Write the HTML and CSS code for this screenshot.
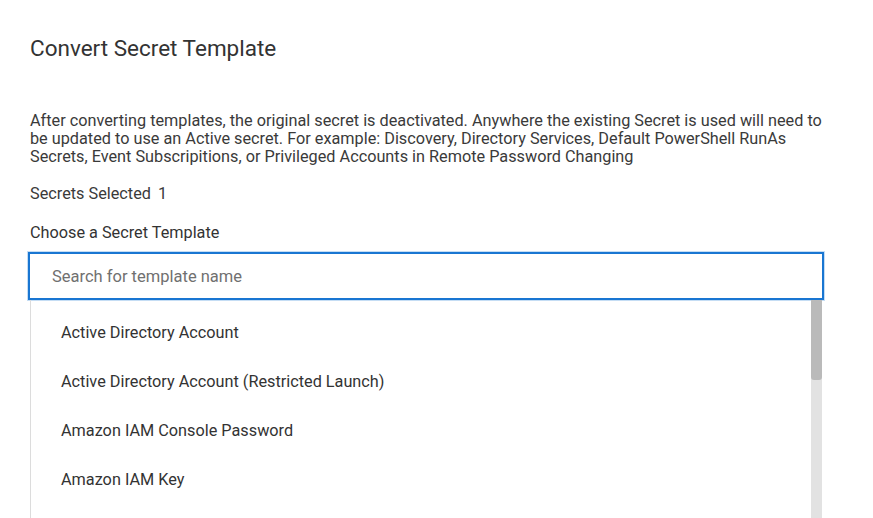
FILE: index.html
```html
<!DOCTYPE html>
<html lang="en">
<head>
<meta charset="utf-8">
<title>Convert Secret Template</title>
<link rel="stylesheet" href="styles.css">
</head>
<body>
<div class="page">
  <h1 class="title">Convert Secret Template</h1>
  <p class="desc">After converting templates, the original secret is deactivated. Anywhere the existing Secret is used will need to be updated to use an Active secret. For example: Discovery, Directory Services, Default PowerShell RunAs Secrets, Event Subscripitions, or Privileged Accounts in Remote Password Changing</p>
  <div class="selected">Secrets Selected <span class="count">1</span></div>
  <div class="label">Choose a Secret Template</div>
  <div class="search"><input class="search-input" type="text" placeholder="Search for template name"></div>
  <div class="dropdown">
    <ul class="list">
      <li class="item">Active Directory Account</li>
      <li class="item">Active Directory Account (Restricted Launch)</li>
      <li class="item">Amazon IAM Console Password</li>
      <li class="item">Amazon IAM Key</li>
    </ul>
    <div class="scrollbar"><div class="thumb"></div></div>
  </div>
</div>
</body>
</html>
```

FILE: styles.css
```css
html, body {
  margin: 0;
  padding: 0;
  background: #ffffff;
  overflow: hidden;
}

.page {
  font-family: Roboto, "Liberation Sans", sans-serif;
  color: #333333;
  padding: 36px 0 0 30px;
  width: 795px;
}

.title {
  margin: 0;
  font-size: 22.5px;
  line-height: 24px;
  font-weight: 400;
  color: #333333;
}

.desc {
  margin: 52px 0 0 0;
  font-size: 16.25px;
  line-height: 18px;
  color: #3a3a3a;
}

.selected {
  margin-top: 19px;
  font-size: 16.25px;
  line-height: 18px;
  color: #3a3a3a;
}

.count {
  margin-left: 3px;
}

.label {
  margin-top: 21px;
  font-size: 16.25px;
  line-height: 18px;
  color: #333333;
}

.search {
  margin: 10px 0 0 -2px;
  width: 796px;
  height: 48px;
  box-sizing: border-box;
  border: 2px solid #1976d2;
  box-shadow: 0 0 0 1px rgba(25, 118, 210, 0.25);
  display: flex;
  align-items: center;
  background: #fff;
}

.search-input {
  border: none;
  outline: none;
  width: 100%;
  padding: 1px 0 0 22px;
  font-family: Roboto, "Liberation Sans", sans-serif;
  font-size: 16.5px;
  color: #333;
  background: transparent;
}

.search-input::placeholder {
  color: #707070;
}

.dropdown {
  display: flex;
  width: 792px;
  height: 218px;
  box-sizing: border-box;
  border-left: 1px solid #dcdcdc;
  overflow: hidden;
}

.list {
  list-style: none;
  margin: 0;
  padding: 8px 0 0 0;
  flex: 1;
  overflow: hidden;
}

.scrollbar {
  width: 11px;
  flex: none;
  background: #e2e2e2;
}

.thumb {
  height: 80px;
  background: #bababa;
  border-radius: 0 0 3px 3px;
}

.item {
  height: 49px;
  line-height: 49px;
  padding-left: 30px;
  font-size: 16.25px;
  color: #333333;
  white-space: nowrap;
}
```
